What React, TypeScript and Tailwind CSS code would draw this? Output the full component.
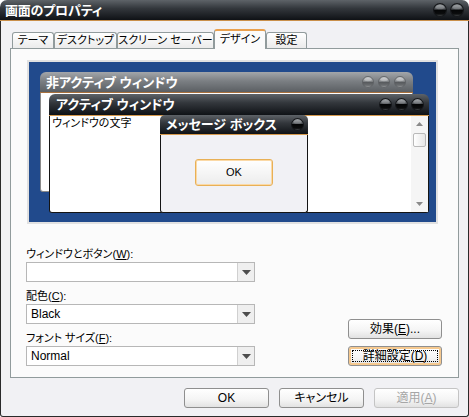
import React from "react";

function Orb({ s, gray, id }: { s: number; gray?: boolean; id: string }) {
  return (
    <svg width={s} height={s} viewBox="0 0 14 14" className="block shrink-0">
      <defs>
        <linearGradient id={id} x1="0" y1="0" x2="0" y2="1">
          {gray ? (
            <>
              <stop offset="0" stopColor="#d2d4d6" />
              <stop offset="0.44" stopColor="#8c8f92" />
              <stop offset="0.5" stopColor="#55585b" />
              <stop offset="0.8" stopColor="#6a6d70" />
              <stop offset="1" stopColor="#a2a5a8" />
            </>
          ) : (
            <>
              <stop offset="0" stopColor="#a4a8ac" />
              <stop offset="0.44" stopColor="#4a4e52" />
              <stop offset="0.5" stopColor="#040506" />
              <stop offset="0.82" stopColor="#0c0d0e" />
              <stop offset="1" stopColor="#5a5e62" />
            </>
          )}
        </linearGradient>
      </defs>
      <circle cx="7" cy="7" r="6.4" fill={`url(#${id})`} stroke={gray ? "#5f6265" : "#15171a"} strokeWidth="1.1" />
      <ellipse cx="7" cy="4.2" rx="4.2" ry="2" fill="#ffffff" opacity={gray ? 0.25 : 0.18} />
    </svg>
  );
}

function Tab({ label, w, active }: { label: string; w: string; active?: boolean }) {
  if (active) {
    return (
      <div
        className={`${w} h-[20px] -mb-px relative z-10 bg-[#fbfbfb] border border-b-0 border-[#919b9c] border-t-2 border-t-[#e9a04e] rounded-t-[3px] flex items-center justify-center pb-[2px] leading-none whitespace-nowrap`}
      >
        {label}
      </div>
    );
  }
  return (
    <div
      className={`${w} h-[16px] bg-[linear-gradient(to_bottom,#ffffff,#ebebeb)] border border-b-0 border-[#919b9c] rounded-t-[3px] flex items-center justify-center leading-none whitespace-nowrap`}
    >
      {label}
    </div>
  );
}

function Arrow() {
  return (
    <svg width="9" height="5" viewBox="0 0 9 5" className="block">
      <polygon points="0,0 9,0 4.5,5" fill="#4d4d4d" />
    </svg>
  );
}

function Combo({ value }: { value: string }) {
  return (
    <div className="h-[20px] w-[229px] border border-[#b7b7b7] bg-white flex">
      <div className="flex-1 flex items-center pl-[4px] font-['Liberation_Sans',sans-serif] text-[12px] leading-none">
        {value}
      </div>
      <div className="w-[17px] border-l border-[#d0d0d0] bg-[#efefef] flex items-center justify-center">
        <Arrow />
      </div>
    </div>
  );
}

function Btn({
  children,
  w,
  disabled,
  focus,
}: {
  children: React.ReactNode;
  w: string;
  disabled?: boolean;
  focus?: boolean;
}) {
  return (
    <div
      className={`${w} h-[20px] rounded-[3px] border ${
        disabled ? "border-[#c4c4c4] text-[#a6a6a6]" : "border-[#8f8f8f] text-black"
      } ${
        focus ? "shadow-[inset_0_0_0_2px_#f6c98f]" : ""
      } bg-[linear-gradient(to_bottom,#ffffff_0%,#f4f4f4_60%,#e2e2e2_100%)] flex items-center justify-center leading-none relative`}
    >
      {focus ? (
        <div className="absolute inset-[3px] border border-dotted border-black" />
      ) : null}
      <span className="relative">{children}</span>
    </div>
  );
}

const darkTitle = "bg-[linear-gradient(to_bottom,#5e6368_0%,#33373c_42%,#0f1216_100%)]";

export default function App() {
  return (
    <div className="w-[469px] h-[417px] flex flex-col font-['Liberation_Sans','Noto_Sans_CJK_JP',sans-serif] [font-feature-settings:'palt'] text-[11px] text-black select-none">
      {/* Title bar */}
      <div
        className={`h-[21px] shrink-0 rounded-t-[7px] ${darkTitle} border-b border-[#c98f4a] flex items-center pl-[5px] pr-[5px]`}
      >
        <span className="text-white font-bold text-[13px] leading-none tracking-[-0.2px]">画面のプロパティ</span>
        <div className="ml-auto flex gap-[3px]">
          <Orb s={14} id="t1" />
          <Orb s={14} id="t2" />
        </div>
      </div>

      {/* Body */}
      <div className="flex-1 bg-[#f1f1f4] border-x border-b border-[#2a2a2a] rounded-b-[3px] flex flex-col pl-[9px] pt-[8px]">
        {/* Tabs */}
        <div className="flex items-end h-[19px] pl-[2px] text-[11px]">
          <Tab label="テーマ" w="w-[42px]" />
          <Tab label="デスクトップ" w="w-[63px]" />
          <Tab label="スクリーン セーバー" w="w-[97px]" />
          <Tab label="デザイン" w="w-[52px]" active />
          <Tab label="設定" w="w-[41px]" />
        </div>

        {/* Panel */}
        <div className="w-[449px] h-[330px] border border-[#919b9c] bg-[#fbfbfb] flex flex-col">
          {/* Preview */}
          <div className="ml-[16px] mt-[11px] w-[411px] h-[164px] border-2 border-[#e1e1e1] bg-[#214a8c] relative overflow-hidden">
            {/* Inactive window */}
            <div className="absolute left-[11px] top-[10px] w-[373px] h-[120px] flex flex-col">
              <div className="h-[20px] rounded-t-[6px] bg-[linear-gradient(to_bottom,#a3a6aa_0%,#7b7f83_45%,#5b5f63_100%)] flex items-center pl-[6px] pr-[7px]">
                <span className="text-white font-bold text-[13px] leading-none">非アクティブ ウィンドウ</span>
                <div className="ml-auto flex gap-[4px]">
                  <Orb s={12} gray id="i1" />
                  <Orb s={12} gray id="i2" />
                  <Orb s={12} gray id="i3" />
                </div>
              </div>
              <div className="h-px bg-[#a8703c]" />
              <div className="flex-1 bg-white border-x border-b border-[#8a8a8a] rounded-b-[3px]" />
            </div>

            {/* Active window */}
            <div className="absolute left-[20px] top-[32px] w-[380px] h-[119px] flex flex-col">
              <div className={`h-[21px] rounded-t-[6px] ${darkTitle} flex items-center pl-[7px] pr-[5px]`}>
                <span className="text-white font-bold text-[13px] leading-none">アクティブ ウィンドウ</span>
                <div className="ml-auto flex gap-[3px]">
                  <Orb s={13} id="a1" />
                  <Orb s={13} id="a2" />
                  <Orb s={13} id="a3" />
                </div>
              </div>
              <div className="h-px bg-[#d69a4e]" />
              <div className="flex-1 bg-white border-x border-b border-[#141414] rounded-b-[3px] flex">
                <div className="flex-1 pl-[2px] pt-[1px] text-[11px] leading-[13px]">ウィンドウの文字</div>
                <div className="w-[17px] bg-[#f5f5f5] flex flex-col items-center pt-[6px] pb-[6px]">
                  <svg width="7" height="4" viewBox="0 0 7 4" className="block">
                    <polygon points="3.5,0 7,4 0,4" fill="#8a8a8a" />
                  </svg>
                  <div className="mt-[7px] w-[13px] h-[14px] rounded-[2px] border border-[#b9b9b9] bg-[linear-gradient(to_right,#ffffff,#e6e6e6)]" />
                  <div className="mt-auto">
                    <svg width="7" height="4" viewBox="0 0 7 4" className="block">
                      <polygon points="0,0 7,0 3.5,4" fill="#8a8a8a" />
                    </svg>
                  </div>
                </div>
              </div>
            </div>

            {/* Message box */}
            <div className="absolute left-[131px] top-[53px] w-[148px] h-[98px] flex flex-col">
              <div className={`h-[19px] rounded-t-[5px] ${darkTitle} flex items-center pl-[6px] pr-[4px]`}>
                <span className="text-white font-bold text-[13px] leading-none">メッセージ ボックス</span>
                <div className="ml-auto">
                  <Orb s={13} id="m1" />
                </div>
              </div>
              <div className="h-px bg-[#d69a4e]" />
              <div className="flex-1 bg-[#f1f1f5] border-x border-b border-[#141414] rounded-b-[3px] flex justify-center pt-[24px]">
                <div className="w-[78px] h-[27px] rounded-[3px] border border-[#e8b056] shadow-[inset_0_0_0_1px_#fbd9a6] bg-[linear-gradient(to_bottom,#ffffff,#ececec)] flex items-center justify-center text-[11px] leading-none font-['Liberation_Sans',sans-serif]">
                  OK
                </div>
              </div>
            </div>
          </div>

          {/* Lower area */}
          <div className="mt-[23px] flex items-end">
            <div className="ml-[15px] flex flex-col">
              <div className="h-[14px] leading-[14px]">
                ウィンドウとボタン(<u>W</u>):
              </div>
              <div className="mt-px">
                <Combo value="" />
              </div>
              <div className="mt-[7px] h-[14px] leading-[14px]">
                配色(<u>C</u>):
              </div>
              <div className="mt-px">
                <Combo value="Black" />
              </div>
              <div className="mt-[7px] h-[14px] leading-[14px]">
                フォント サイズ(<u>F</u>):
              </div>
              <div className="mt-px">
                <Combo value="Normal" />
              </div>
            </div>
            <div className="ml-auto mr-[16px] flex flex-col gap-[7px] text-[12px]">
              <Btn w="w-[94px]">
                効果(<u>E</u>)...
              </Btn>
              <Btn w="w-[94px]" focus>
                詳細設定(<u>D</u>)
              </Btn>
            </div>
          </div>
        </div>

        {/* Bottom buttons */}
        <div className="w-[449px] mt-[10px] flex justify-end gap-[10px] text-[12px]">
          <Btn w="w-[85px]">OK</Btn>
          <Btn w="w-[85px]">キャンセル</Btn>
          <Btn w="w-[85px]" disabled>
            適用(<u>A</u>)
          </Btn>
        </div>
      </div>
    </div>
  );
}
